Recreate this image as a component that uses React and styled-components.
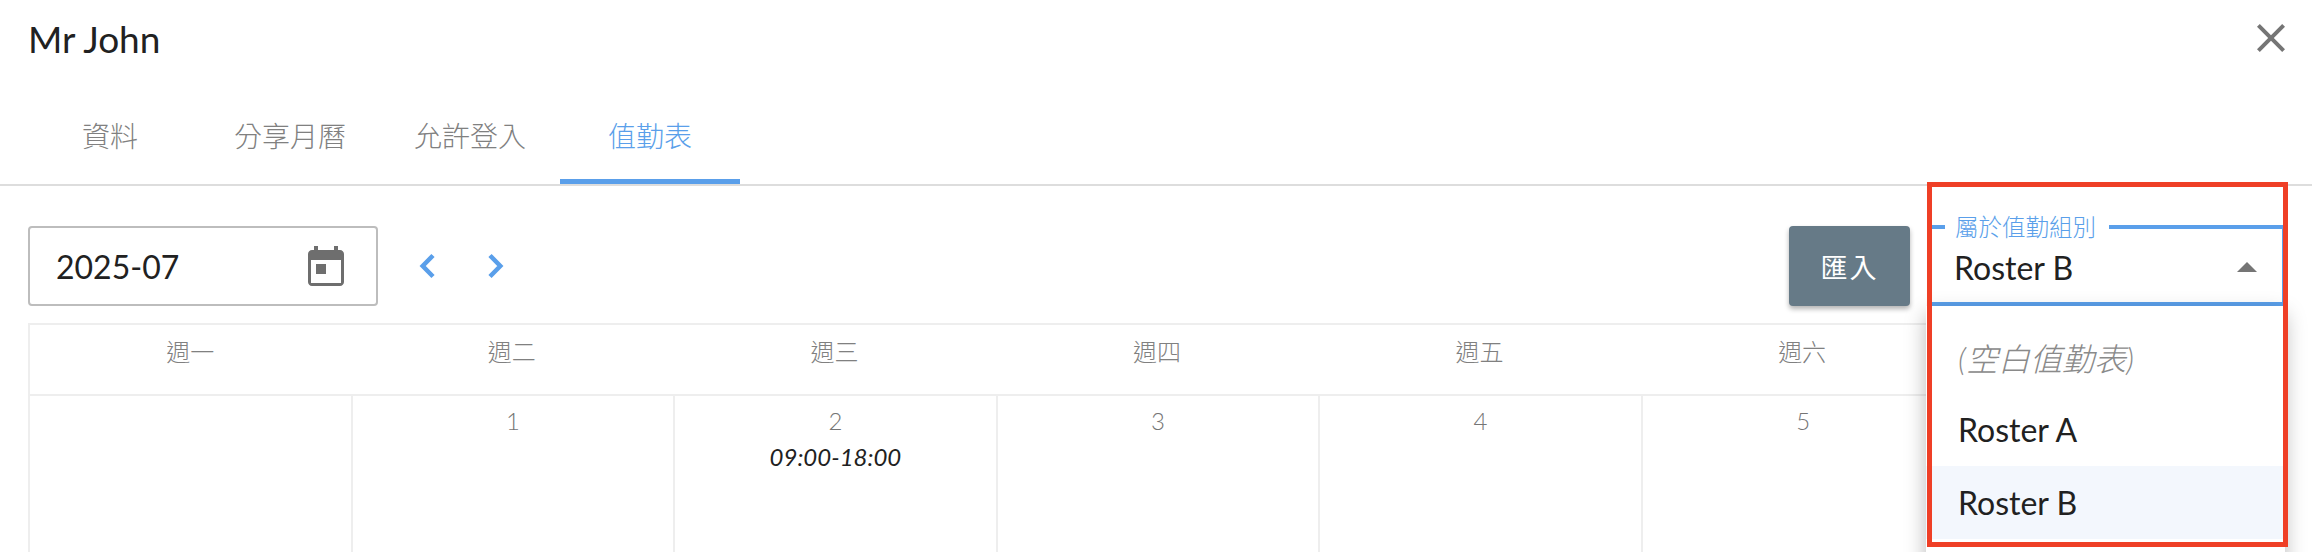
import React from 'react';
import styled, { createGlobalStyle } from 'styled-components';

const GlobalStyle = createGlobalStyle`
  html, body {
    margin: 0;
    padding: 0;
    background: #fff;
  }
  body {
    font-family: Lato, "Noto Sans CJK TC", sans-serif;
  }
  * {
    box-sizing: border-box;
  }
`;

const Page = styled.div`
  position: relative;
  width: 2312px;
  height: 552px;
  overflow: hidden;
  background: #fff;
`;

const TitleBar = styled.div`
  display: flex;
  justify-content: space-between;
  align-items: flex-start;
  height: 87px;
  padding: 14px 17px 0 28px;
`;

const Title = styled.h2`
  margin: 0;
  font-size: 37px;
  line-height: 50px;
  font-weight: 400;
  color: #212121;
`;

const IconButton = styled.button`
  display: flex;
  align-items: center;
  justify-content: center;
  padding: 0;
  border: none;
  background: transparent;
  color: ${p => p.$color || '#757575'};
  cursor: pointer;
`;

const TabBar = styled.div`
  display: flex;
  height: 99px;
  padding-left: 20px;
  border-bottom: 2px solid #ddd;
`;

const Tab = styled.div`
  display: flex;
  align-items: center;
  justify-content: center;
  width: 180px;
  height: 97px;
  padding-top: 3px;
  font-size: 28px;
  font-weight: 300;
  color: ${p => (p.$active ? '#5a9fea' : '#808080')};
  border-bottom: 5px solid ${p => (p.$active ? '#5a9fea' : 'transparent')};
`;

const Toolbar = styled.div`
  display: flex;
  align-items: flex-start;
  height: 137px;
  padding: 40px 29px 0 28px;
`;

const DateField = styled.div`
  display: flex;
  align-items: center;
  justify-content: space-between;
  width: 350px;
  height: 80px;
  padding: 0 32px 0 26px;
  border: 2px solid #bdbdbd;
  border-radius: 4px;
  font-size: 32px;
  color: #212121;
`;

const MonthNav = styled.div`
  display: flex;
  gap: 21px;
  height: 80px;
  margin-left: 25px;
`;

const Spacer = styled.div`
  flex: 1;
`;

const ImportButton = styled.button`
  width: 121px;
  height: 80px;
  margin-right: 18px;
  border: none;
  border-radius: 4px;
  background: #667a87;
  color: #fff;
  font-family: inherit;
  font-size: 27px;
  letter-spacing: 2px;
  box-shadow: 0 3px 5px rgba(0, 0, 0, 0.3);
`;

const SelectBox = styled.div`
  position: relative;
  width: 355px;
  margin-top: -11px;
`;

const SelectField = styled.fieldset`
  display: flex;
  align-items: center;
  justify-content: space-between;
  height: 91px;
  margin: 0;
  padding: 0 25px 7px 25px;
  border: solid #5a9fea;
  border-width: 4px 1px;
  font-size: 32px;
  color: #212121;
`;

const SelectLegend = styled.legend`
  margin-left: -9px;
  padding: 0 13px 0 10px;
  font-size: 23.5px;
  line-height: 24px;
  font-weight: 300;
  color: #5a9fea;
`;

const Caret = styled.span`
  width: 0;
  height: 0;
  border-left: 10px solid transparent;
  border-right: 10px solid transparent;
  border-bottom: 10px solid #757575;
`;

const Menu = styled.div`
  position: absolute;
  top: 91px;
  left: -2px;
  width: 359px;
  height: 260px;
  padding-top: 14px;
  background: #fff;
  box-shadow: 0 8px 20px rgba(0, 0, 0, 0.28);
  z-index: 2;
`;

const MenuItem = styled.div`
  display: flex;
  align-items: center;
  height: 73px;
  padding-left: 32px;
  font-size: 32px;
  font-style: ${p => (p.$blank ? 'italic' : 'normal')};
  font-weight: ${p => (p.$blank ? 300 : 400)};
  color: ${p => (p.$blank ? '#8a8a8a' : '#212121')};
  background: ${p => (p.$selected ? '#f3f7fd' : 'transparent')};
`;

const Calendar = styled.div`
  display: grid;
  grid-template-columns: repeat(7, 1fr);
  width: 2258px;
  margin-left: 28px;
  border-top: 2px solid #eee;
`;

const DayName = styled.div`
  height: 71px;
  padding-top: 12px;
  border-bottom: 2px solid #eee;
  border-left: ${p => (p.$first ? '2px solid #eee' : 'none')};
  font-size: 24px;
  line-height: 30px;
  font-weight: 300;
  text-align: center;
  color: #808080;
`;

const DayCell = styled.div`
  height: 200px;
  padding-top: 10px;
  border-left: 2px solid #eee;
  text-align: center;
`;

const DayNumber = styled.div`
  font-size: 24px;
  line-height: 30px;
  font-weight: 300;
  color: #757575;
`;

const Shift = styled.div`
  margin-top: 6px;
  font-size: 24px;
  line-height: 30px;
  font-style: italic;
  color: #212121;
`;

const Highlight = styled.div`
  position: absolute;
  top: 182px;
  left: 1927px;
  width: 361px;
  height: 365px;
  border: 5px solid #ef3f26;
  z-index: 3;
  pointer-events: none;
`;

const days = ['週一', '週二', '週三', '週四', '週五', '週六', '週日'];
const cells = [
  { n: '' },
  { n: 1 },
  { n: 2, shift: '09:00-18:00' },
  { n: 3 },
  { n: 4 },
  { n: 5 },
  { n: 6 },
];

function CloseIcon() {
  return (
    <svg width="48" height="48" viewBox="0 0 24 24" fill="currentColor">
      <path d="M19 6.41L17.59 5 12 10.59 6.41 5 5 6.41 10.59 12 5 17.59 6.41 19 12 13.41 17.59 19 19 17.59 13.41 12z" />
    </svg>
  );
}

function CalendarIcon() {
  return (
    <svg width="36" height="40" viewBox="0 0 36 40" fill="#6e6e6e">
      <path
        fillRule="evenodd"
        d="M6 0h4v4h16V0h4v4h2c2.2 0 4 1.8 4 4v28c0 2.2-1.8 4-4 4H4c-2.2 0-4-1.8-4-4V8c0-2.2 1.8-4 4-4h2V0zM3 14v23h30V14H3z"
      />
      <rect x="8" y="18" width="10" height="10" />
    </svg>
  );
}

function Chevron({ flip }) {
  return (
    <svg width="48" height="80" viewBox="0 0 48 80" fill="none" stroke="#5a9fea" strokeWidth="4.5">
      <path d={flip ? 'M18 29.5L28.3 40 18 50.5' : 'M30 29.5L19.7 40 30 50.5'} />
    </svg>
  );
}

export default function App() {
  return (
    <Page>
      <GlobalStyle />
      <TitleBar>
        <Title>Mr John</Title>
        <IconButton aria-label="close"><CloseIcon /></IconButton>
      </TitleBar>
      <TabBar>
        <Tab>資料</Tab>
        <Tab>分享月曆</Tab>
        <Tab>允許登入</Tab>
        <Tab $active>值勤表</Tab>
      </TabBar>
      <Toolbar>
        <DateField>
          2025-07
          <CalendarIcon />
        </DateField>
        <MonthNav>
          <IconButton aria-label="previous"><Chevron /></IconButton>
          <IconButton aria-label="next"><Chevron flip /></IconButton>
        </MonthNav>
        <Spacer />
        <ImportButton>匯入</ImportButton>
        <SelectBox>
          <SelectField>
            <SelectLegend>屬於值勤組別</SelectLegend>
            Roster B
            <Caret />
          </SelectField>
          <Menu>
            <MenuItem $blank>(空白值勤表)</MenuItem>
            <MenuItem>Roster A</MenuItem>
            <MenuItem $selected>Roster B</MenuItem>
          </Menu>
        </SelectBox>
      </Toolbar>
      <Calendar>
        {days.map((d, i) => <DayName key={d} $first={i === 0}>{d}</DayName>)}
        {cells.map((c, i) => (
          <DayCell key={i}>
            <DayNumber>{c.n}</DayNumber>
            {c.shift && <Shift>{c.shift}</Shift>}
          </DayCell>
        ))}
      </Calendar>
      <Highlight />
    </Page>
  );
}
